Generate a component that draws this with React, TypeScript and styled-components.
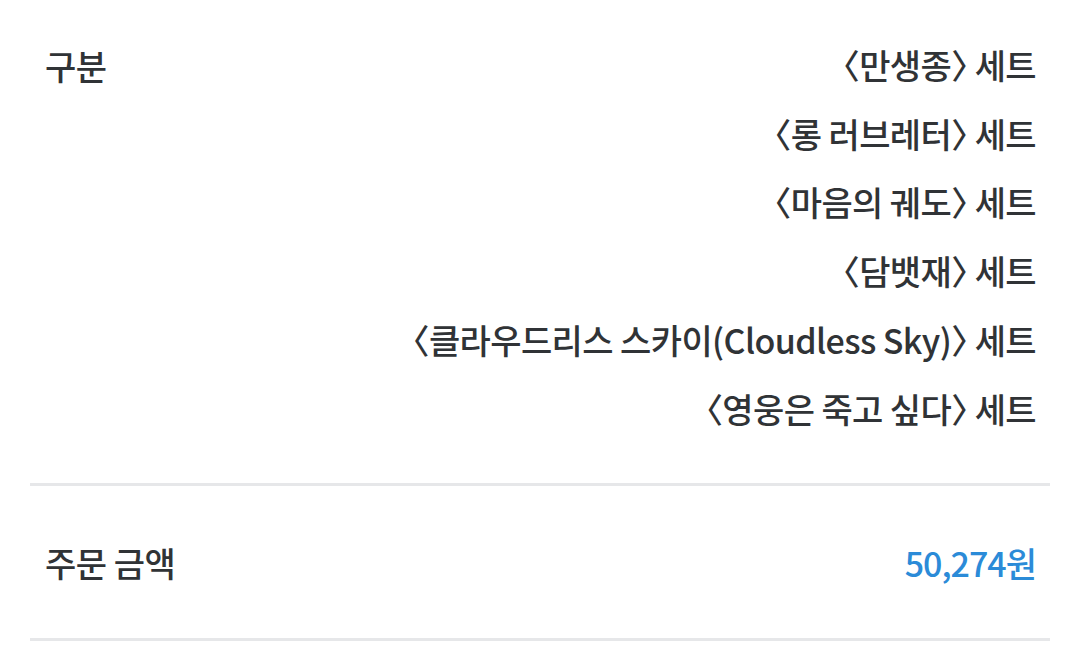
import styled, { createGlobalStyle } from "styled-components";

const GlobalStyle = createGlobalStyle`
  body {
    margin: 0;
    background: #ffffff;
    font-family: "Noto Sans CJK KR", "Noto Sans", sans-serif;
    color: #303336;
  }
`

const Page = styled.div`
  padding: 0 30px;
`

const Section = styled.div<{ $center?: boolean }>`
  display: flex;
  justify-content: space-between;
  align-items: ${(p) => (p.$center ? "center" : "flex-start")};
  padding: ${(p) => (p.$center ? "0 14px 0 15px" : "31px 14px 40px 15px")};
  height: ${(p) => (p.$center ? "155px" : "auto")};
  border-bottom: 3px solid #e6e7e9;
  box-sizing: border-box;
`

const Label = styled.div`
  font-size: 34px;
  font-weight: 500;
  line-height: 69px;
  letter-spacing: -0.5px;
`

const List = styled.div`
  display: flex;
  flex-direction: column;
  align-items: flex-end;
`

const Item = styled.div`
  font-size: 34px;
  font-weight: 500;
  line-height: 68.7px;
  letter-spacing: -0.6px;
  white-space: nowrap;
`

// half-width angle brackets
const Bracket = styled.span`
  font-feature-settings: "halt" 1;
`

const Price = styled.div`
  font-size: 34px;
  font-weight: 500;
  color: #2b8bd8;
  letter-spacing: -1px;
`

const sets = [
  "만생종",
  "롱 러브레터",
  "마음의 궤도",
  "담뱃재",
  "클라우드리스 스카이(Cloudless Sky)",
  "영웅은 죽고 싶다",
]

const App = () => {
  return (
    <Page>
      <GlobalStyle />
      <Section>
        <Label>구분</Label>
        <List>
          {sets.map((title) => (
            <Item key={title}>
              <Bracket>〈</Bracket>{title}<Bracket>〉</Bracket> 세트
            </Item>
          ))}
        </List>
      </Section>
      <Section $center>
        <Label>주문 금액</Label>
        <Price>50,274원</Price>
      </Section>
    </Page>
  )
}

export default App
